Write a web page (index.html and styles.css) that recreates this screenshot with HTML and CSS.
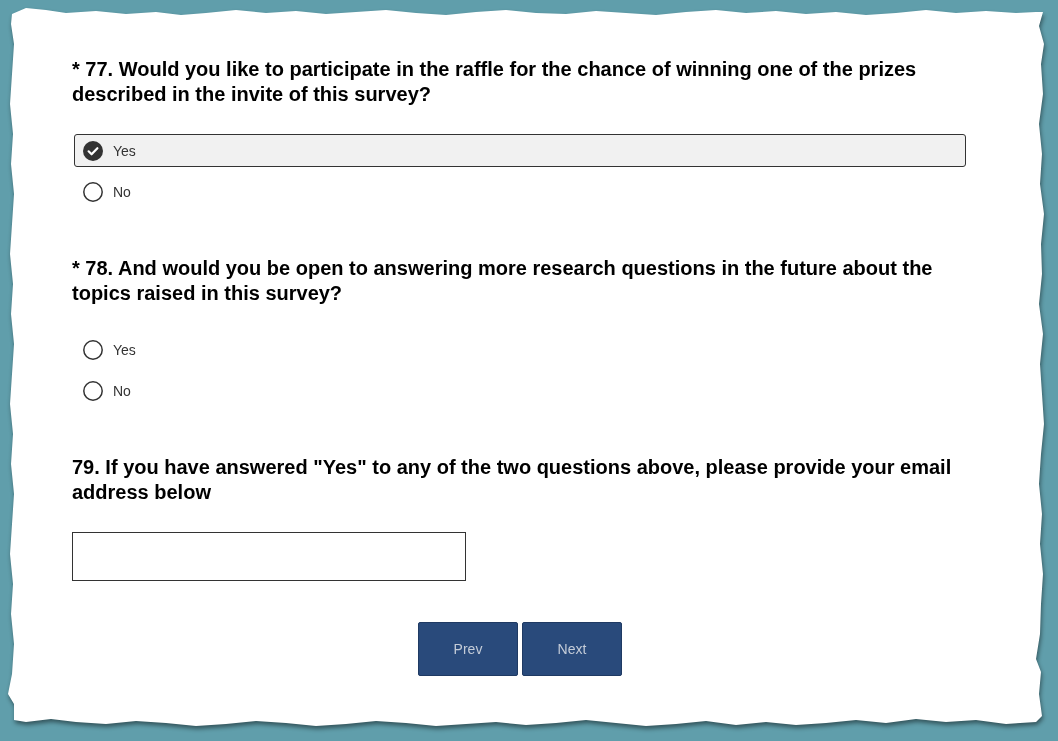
FILE: index.html
```html
<!DOCTYPE html>
<html lang="en">
<head>
  <meta charset="UTF-8">
  <title>Survey - Page 8</title>
  <link rel="stylesheet" href="styles.css">
</head>
<body>
  <div class="sheet-shadow">
    <div class="sheet">

      <!-- Question 77 -->
      <div class="question">
        <h2 class="question-title">* 77. Would you like to participate in the raffle for the chance of winning one of the prizes described in the invite of this survey?</h2>
        <div class="options">
          <label class="option selected">
            <svg class="radio" width="20" height="20" viewBox="0 0 20 20"><circle cx="10" cy="10" r="10" fill="#333"/><path d="M5.6 10.3l3 3 5.8-6.1" fill="none" stroke="#fff" stroke-width="2.2" stroke-linecap="round" stroke-linejoin="round"/></svg>
            <span>Yes</span>
          </label>
          <label class="option">
            <svg class="radio" width="20" height="20" viewBox="0 0 20 20"><circle cx="10" cy="10" r="9.2" fill="#fff" stroke="#333" stroke-width="1.5"/></svg>
            <span>No</span>
          </label>
        </div>
      </div>

      <!-- Question 78 -->
      <div class="question">
        <h2 class="question-title">* 78. And would you be open to answering more research questions in the future about the topics raised in this survey?</h2>
        <div class="options">
          <label class="option">
            <svg class="radio" width="20" height="20" viewBox="0 0 20 20"><circle cx="10" cy="10" r="9.2" fill="#fff" stroke="#333" stroke-width="1.5"/></svg>
            <span>Yes</span>
          </label>
          <label class="option">
            <svg class="radio" width="20" height="20" viewBox="0 0 20 20"><circle cx="10" cy="10" r="9.2" fill="#fff" stroke="#333" stroke-width="1.5"/></svg>
            <span>No</span>
          </label>
        </div>
      </div>

      <!-- Question 79 -->
      <div class="question question-last">
        <h2 class="question-title">79. If you have answered "Yes" to any of the two questions above, please provide your email address below</h2>
        <input type="text" class="email-input">
      </div>

      <div class="nav-buttons">
        <button class="nav-btn">Prev</button>
        <button class="nav-btn">Next</button>
      </div>

    </div>
  </div>
</body>
</html>
```

FILE: styles.css
```css
html, body {
  height: 100%;
}

body {
  margin: 0;
  padding: 4px 10px 11px 6px;
  box-sizing: border-box;
  background-color: #609eab;
  font-family: "Liberation Sans", Arial, sans-serif;
  color: #000;
}

.sheet-shadow {
  filter: drop-shadow(1px 3px 2px rgba(0, 0, 0, 0.45));
}

.sheet {
  height: 726px;
  box-sizing: border-box;
  padding: 53px 80px 0 66px;
  background: #fff;
  clip-path: polygon(
    6px 10px, 20px 4px, 40px 6px, 60px 9px, 90px 7px, 120px 10px, 150px 8px, 175px 11px, 200px 9px, 230px 6px,
    260px 9px, 290px 7px, 320px 10px, 350px 8px, 380px 6px, 410px 9px, 440px 11px, 470px 8px, 500px 6px, 530px 9px,
    560px 10px, 590px 7px, 620px 9px, 650px 11px, 680px 8px, 710px 6px, 740px 9px, 770px 7px, 800px 10px, 830px 8px,
    860px 11px, 890px 9px, 920px 6px, 950px 9px, 980px 7px, 1010px 9px, 1030px 8px,
    1037px 8px, 1033px 22px, 1038px 40px, 1035px 60px, 1037px 90px, 1033px 120px, 1036px 150px, 1034px 180px,
    1038px 210px, 1035px 240px, 1036px 270px, 1033px 300px, 1037px 330px, 1034px 360px, 1036px 390px, 1038px 420px,
    1035px 450px, 1033px 480px, 1036px 510px, 1034px 540px, 1037px 570px, 1035px 600px, 1034px 630px, 1030px 655px,
    1035px 668px, 1033px 690px, 1036px 712px,
    1030px 718px, 1000px 720px, 970px 716px, 940px 718px, 910px 715px, 880px 719px, 850px 716px, 820px 719px,
    790px 721px, 760px 718px, 730px 721px, 700px 717px, 670px 720px, 640px 722px, 610px 719px, 580px 716px,
    550px 719px, 520px 721px, 490px 718px, 460px 720px, 430px 722px, 400px 719px, 370px 717px, 340px 720px,
    310px 722px, 280px 719px, 250px 717px, 220px 720px, 190px 722px, 160px 719px, 130px 717px, 100px 720px,
    70px 718px, 45px 715px, 20px 718px, 8px 716px,
    8px 700px, 2px 690px, 6px 670px, 8px 640px, 5px 610px, 7px 580px, 4px 550px, 6px 520px, 8px 490px, 5px 460px,
    7px 430px, 4px 400px, 6px 370px, 8px 340px, 5px 310px, 7px 280px, 4px 250px, 6px 220px, 8px 190px, 5px 160px,
    7px 130px, 4px 100px, 6px 70px, 8px 40px, 5px 20px
  );
}

.question {
  margin-bottom: 48px;
}

.question-last {
  margin-bottom: 41px;
}

.question-title {
  margin: 0 0 27px;
  font-size: 20px;
  line-height: 25px;
  font-weight: bold;
  color: #000;
}

.options {
  display: flex;
  flex-direction: column;
  gap: 8px;
  padding-left: 2px;
  margin-right: 2px;
}

.option {
  display: flex;
  align-items: center;
  gap: 10px;
  height: 33px;
  box-sizing: border-box;
  padding-left: 8px;
  border: 1px solid transparent;
  border-radius: 3px;
  font-size: 14px;
  color: #333;
}

.option.selected {
  background: #f1f1f1;
  border-color: #333;
}

.radio {
  flex-shrink: 0;
}

.email-input {
  display: block;
  width: 394px;
  height: 49px;
  box-sizing: border-box;
  border: 1px solid #333;
  border-radius: 0;
  margin: 0;
}

.nav-buttons {
  display: flex;
  justify-content: center;
  gap: 4px;
}

.nav-btn {
  width: 100px;
  height: 54px;
  border: 1px solid #1f3a63;
  border-radius: 2px;
  background-color: #294a7b;
  color: #c4ccd8;
  font-family: "Liberation Sans", Arial, sans-serif;
  font-size: 14px;
  cursor: pointer;
}
```
